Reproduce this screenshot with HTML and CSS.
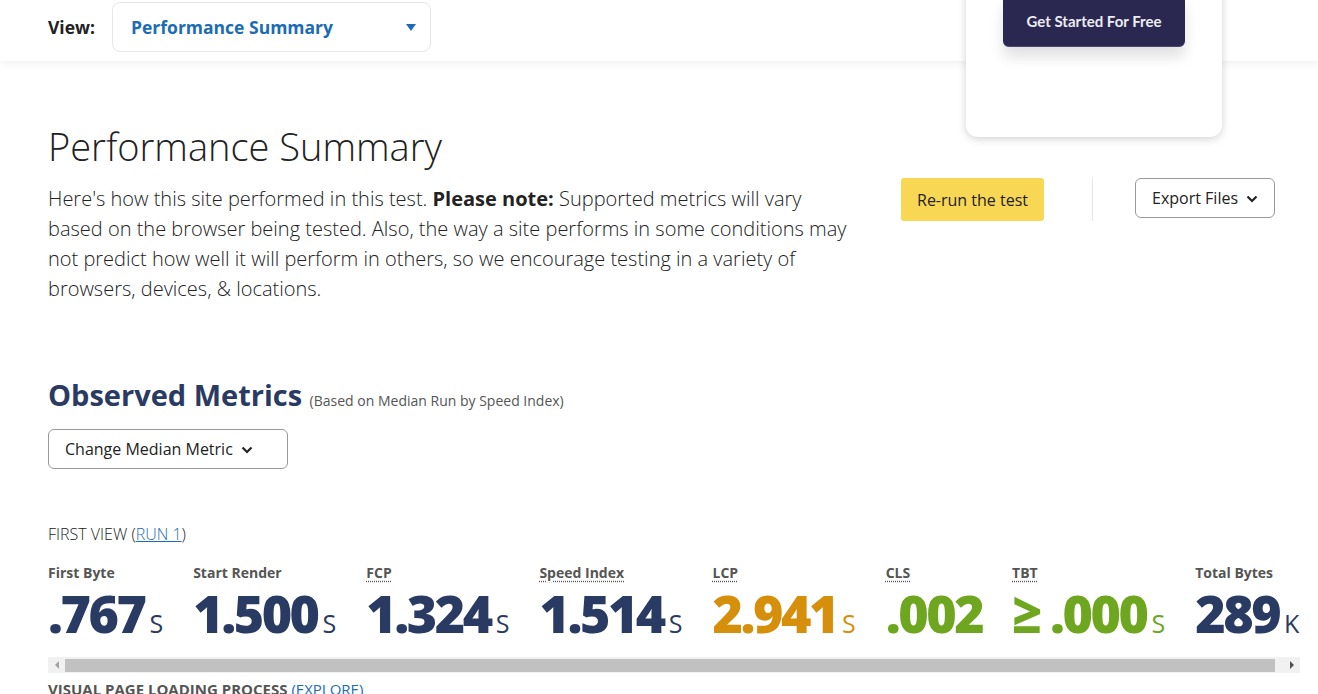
FILE: index.html
```html
<!DOCTYPE html>
<html lang="en">
<head>
<meta charset="utf-8">
<title>Performance Summary</title>
<link rel="stylesheet" href="styles.css">
</head>
<body>
<header class="topbar">
  <span class="view-label">View:</span>
  <div class="view-select">
    <span>Performance Summary</span>
    <span class="caret"></span>
  </div>
</header>

<aside class="promo-card">
  <a class="promo-btn" href="#">Get Started For Free</a>
</aside>

<main class="main">
  <h1 class="page-title">Performance Summary</h1>
  <div class="intro-row">
    <p class="intro">Here's how this site performed in this test. <strong>Please note:</strong> Supported metrics will vary based on the browser being tested. Also, the way a site performs in some conditions may not predict how well it will perform in others, so we encourage testing in a variety of browsers, devices, &amp; locations.</p>
    <div class="actions">
      <a class="btn-rerun" href="#">Re-run the test</a>
      <span class="divider"></span>
      <button class="btn-outline btn-export">Export Files
        <svg class="chev" viewBox="0 0 12 8" width="12" height="8"><path d="M1.5 1.5 6 6l4.5-4.5" fill="none" stroke="#222" stroke-width="2.2"/></svg>
      </button>
    </div>
  </div>

  <h2 class="section-title">Observed Metrics <small>(Based on Median Run by Speed Index)</small></h2>
  <button class="btn-outline btn-median">Change Median Metric
    <svg class="chev" viewBox="0 0 12 8" width="12" height="8"><path d="M1.5 1.5 6 6l4.5-4.5" fill="none" stroke="#222" stroke-width="2.2"/></svg>
  </button>

  <p class="run-label">FIRST VIEW (<a href="#">RUN 1</a>)</p>

  <div class="metrics-scroller">
    <ul class="metrics">
      <li class="metric"><span class="m-label">First Byte</span><span class="m-value">.767<span class="unit">s</span></span></li>
      <li class="metric"><span class="m-label">Start Render</span><span class="m-value">1.500<span class="unit">s</span></span></li>
      <li class="metric"><span class="m-label u">FCP</span><span class="m-value">1.324<span class="unit">s</span></span></li>
      <li class="metric"><span class="m-label u">Speed Index</span><span class="m-value">1.514<span class="unit">s</span></span></li>
      <li class="metric"><span class="m-label u">LCP</span><span class="m-value warn">2.941<span class="unit">s</span></span></li>
      <li class="metric"><span class="m-label u">CLS</span><span class="m-value good">.002</span></li>
      <li class="metric"><span class="m-label u">TBT</span><span class="m-value good">≥ .000<span class="unit">s</span></span></li>
      <li class="metric"><span class="m-label">Total Bytes</span><span class="m-value">289<span class="unit">KB</span></span></li>
    </ul>
  </div>
  <div class="fake-scrollbar">
    <span class="sb-btn sb-left"></span>
    <span class="sb-thumb"></span>
    <span class="sb-btn sb-right"></span>
  </div>

  <h3 class="visual-title">VISUAL PAGE LOADING PROCESS <a href="#">(EXPLORE)</a></h3>
</main>
</body>
</html>
```

FILE: styles.css
```css
* { box-sizing: border-box; }

html, body {
  margin: 0;
  padding: 0;
  background: #fff;
  font-family: "Open Sans", "Liberation Sans", sans-serif;
  color: #222;
  overflow: hidden;
}

.topbar {
  position: relative;
  z-index: 1;
  height: 61px;
  display: flex;
  align-items: flex-start;
  padding: 2px 0 0 48px;
  background: #fff;
  box-shadow: 0 3px 8px rgba(0, 0, 0, 0.06);
}

.view-label {
  font-size: 17.5px;
  font-weight: 700;
  color: #222;
  line-height: 50px;
}

.view-select {
  margin-left: 17px;
  width: 319px;
  height: 50px;
  border: 1px solid #e6e6e6;
  border-radius: 8px;
  display: flex;
  align-items: center;
  justify-content: space-between;
  padding: 0 14px 0 18px;
  font-size: 17.5px;
  font-weight: 700;
  color: #1b6cb5;
}

.caret {
  width: 0;
  height: 0;
  border-left: 5px solid transparent;
  border-right: 5px solid transparent;
  border-top: 7px solid #1b6cb5;
}

.promo-card {
  position: absolute;
  z-index: 2;
  left: 966px;
  top: -40px;
  width: 256px;
  height: 177px;
  background: #fff;
  border-radius: 12px;
  box-shadow: 0 2px 8px rgba(0, 0, 0, 0.18);
  padding: 35px 0 0 37px;
}

.promo-btn {
  display: flex;
  align-items: center;
  justify-content: center;
  width: 182px;
  height: 52px;
  background: #2a2850;
  border-radius: 6px;
  border-bottom: 1px solid #4a4670;
  color: #ececf2;
  text-decoration: none;
  font-family: Lato, "Open Sans", sans-serif;
  font-weight: 700;
  font-size: 15px;
  box-shadow: 0 10px 14px rgba(0, 0, 0, 0.12);
}

.main {
  padding: 0 18px 0 48px;
}

.page-title {
  margin: 62px 0 0;
  font-size: 38px;
  font-weight: 300;
  line-height: 46px;
  color: #222;
}

.intro-row {
  display: flex;
  justify-content: space-between;
  align-items: flex-start;
  margin-top: 9px;
  padding-right: 25px;
}

.intro {
  margin: 6px 0 0;
  width: 805px;
  font-size: 20px;
  font-weight: 300;
  line-height: 30px;
  color: #222;
}

.intro strong { font-weight: 700; }

.actions {
  display: flex;
  align-items: flex-start;
}

.btn-rerun {
  display: flex;
  align-items: center;
  justify-content: center;
  width: 143px;
  height: 43px;
  background: #f8d755;
  border-radius: 3px;
  color: #222;
  font-size: 16px;
  text-decoration: none;
}

.divider {
  width: 1px;
  height: 43px;
  background: #e6e6e6;
  margin: 0 42px 0 48px;
}

.btn-outline {
  display: flex;
  align-items: center;
  gap: 8px;
  height: 40px;
  background: #fff;
  border: 1px solid #999;
  border-radius: 6px;
  font-family: "Open Sans", "Liberation Sans", sans-serif;
  font-size: 16px;
  color: #222;
  padding: 0 0 0 16px;
  cursor: pointer;
}

.btn-export { width: 140px; }

.btn-median {
  width: 240px;
  margin-top: 9px;
}

.chev { display: block; margin-top: 2px; }

.section-title {
  margin: 72px 0 0;
  font-size: 29px;
  font-weight: 700;
  line-height: 38px;
  color: #2a3b63;
}

.section-title small {
  font-size: 14px;
  font-weight: 400;
  color: #555;
}

.run-label {
  margin: 55px 0 0;
  font-size: 16px;
  line-height: 20px;
  font-weight: 300;
  color: #222;
}

.run-label a { color: #1b6cb5; }

.metrics-scroller {
  overflow: hidden;
  margin-top: 19px;
  padding-bottom: 8px;
}

.metrics {
  list-style: none;
  margin: 0;
  padding: 0;
  display: flex;
  gap: 30px;
  width: max-content;
}

.metric {
  display: flex;
  flex-direction: column;
}

.m-label {
  font-size: 14px;
  font-weight: 700;
  line-height: 20px;
  color: #555;
  align-self: flex-start;
}

.m-label.u {
  text-decoration: underline dotted;
  text-underline-offset: 3px;
}

.m-value {
  margin-top: 4px;
  font-size: 52px;
  font-weight: 800;
  line-height: 52px;
  letter-spacing: -2.5px;
  color: #2a3b63;
  white-space: nowrap;
}

.m-value.warn { color: #d68f0a; }
.m-value.good { color: #6ea71f; }

.unit {
  margin-left: 5px;
  font-size: 25px;
  font-weight: 400;
  letter-spacing: 0;
  text-transform: uppercase;
}

.fake-scrollbar {
  display: flex;
  align-items: center;
  height: 16px;
  background: #f1f1f1;
}

.sb-btn {
  width: 17px;
  height: 16px;
  display: flex;
  align-items: center;
  justify-content: center;
}

.sb-btn::before {
  content: "";
  width: 0;
  height: 0;
  border-top: 4px solid transparent;
  border-bottom: 4px solid transparent;
}

.sb-left::before { border-right: 4px solid #a3a3a3; }
.sb-right::before { border-left: 4px solid #505050; }

.sb-thumb {
  flex: 1;
  height: 13px;
  margin-right: 8px;
  background: #c1c1c1;
}

.visual-title {
  margin: 6px 0 0;
  font-size: 15px;
  font-weight: 700;
  line-height: 20px;
  color: #555;
}

.visual-title a {
  font-weight: 400;
  color: #1b6cb5;
  text-decoration: none;
}
```
